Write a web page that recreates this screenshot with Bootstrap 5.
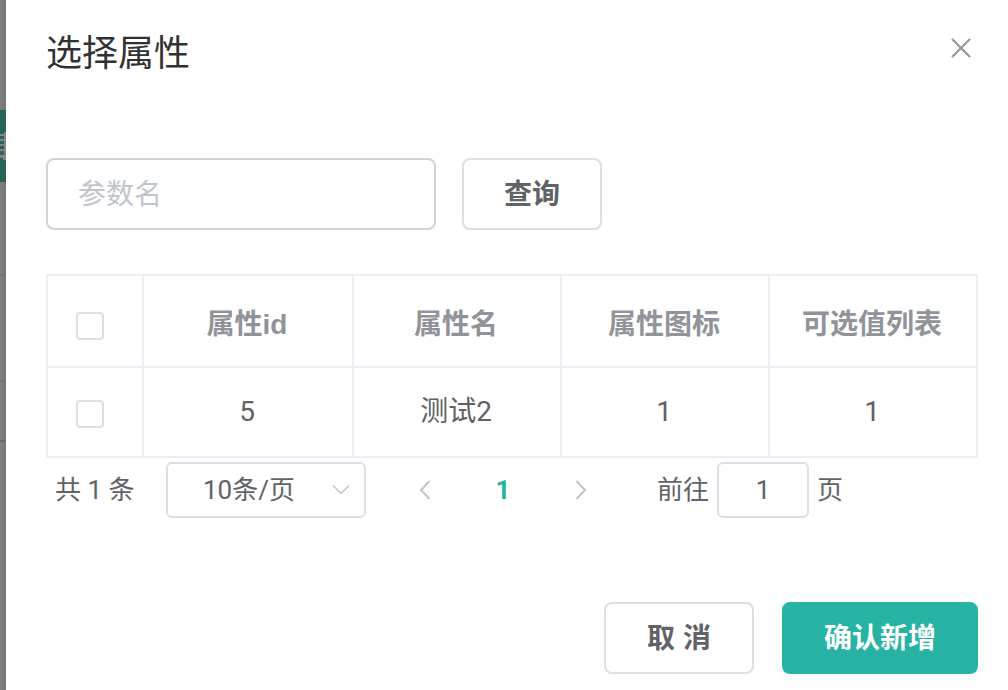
<!DOCTYPE html>
<html lang="zh-CN">
<head>
<meta charset="utf-8">
<meta name="viewport" content="width=device-width, initial-scale=1">
<title>选择属性</title>
<link href="https://cdn.jsdelivr.net/npm/bootstrap@5.3.0/dist/css/bootstrap.min.css" rel="stylesheet">
<style>
  body { font-family: "Liberation Sans", "Noto Sans CJK SC", sans-serif; font-size: 28px; line-height: 40px; color: #606266; background: #fff; }
  .page-edge { width: 6px; background: linear-gradient(90deg, #808080, #757575); }
  .edge-panel { height: 442px; border-bottom: 2px solid #686868; padding-top: 110px; }
  .edge-tab { height: 72px; background: #28635b; padding-top: 22px; }
  .edge-tab svg { display: block; }
  .edge-line { border-top: 2px solid #727278; height: 106px; }
  .edge-gap { height: 92px; }
  .dialog { padding: 32px 30px 16px 40px; }
  .dialog-title { font-size: 36px; line-height: 44px; color: #303133; }
  .close-btn { margin: 6px 7px 0 0; line-height: 0; }
  .box, .box:focus { border: 2px solid #dcdfe6; border-radius: 8px; color: #606266; background-color: #fff; font-size: 28px; line-height: 40px; }
  .search-row { margin-top: 82px; gap: 26px; }
  .search-input { width: 390px; height: 72px; padding: 2px 30px 0; border-color: #cfd3db; }
  .search-input::placeholder { color: #c0c4cc; opacity: 1; }
  .tall { height: 72px; font-weight: 700; padding: 2px 0 0; }
  .w-query { width: 140px; } .w-cancel { width: 150px; } .w-ok { width: 196px; }
  .ok-btn, .ok-btn:hover { background: #26b3a3; color: #fff; border: 0; border-radius: 8px; font-size: 28px; }
  .attr-table { margin-top: 44px; table-layout: fixed; border-collapse: separate; border-spacing: 0; border: solid #ebeef5; border-width: 2px 0 0 2px; }
  .attr-table th, .attr-table td { border: solid #ebeef5; border-width: 0 2px 2px 0; text-align: center; vertical-align: middle; padding: 0 2px 0 0; height: 90px; }
  .attr-table th { color: #909399; height: 92px; padding-top: 8px; }
  .attr-table td, .pager, .pager .box { font-family: Roboto, "Noto Sans CJK SC", sans-serif; }
  .attr-table .pick { text-align: left; padding-left: 28px; line-height: 0; width: 96px; }
  .pick .form-check-input { width: 28px; height: 28px; margin: 2px 0 0; border: 2px solid #dcdfe6; border-radius: 4px; }
  td.pick .form-check-input { margin-top: 4px; }
  .col-id { width: 210px; }
  .pager { margin-top: 4px; font-size: 26px; line-height: 32px; }
  .pager .box { height: 56px; font-size: 26px; border-radius: 6px; }
  .total { width: 120px; padding-left: 9px; }
  .size-wrap { width: 200px; }
  .size-wrap select { appearance: none; padding: 0 0 0 35px; width: 100%; }
  .size-wrap svg { right: 16px; top: 22px; pointer-events: none; }
  .pager-nav { margin-left: 20px; }
  .pager-nav button, .pager-nav a { width: 78px; text-align: center; line-height: 32px; }
  .pager-nav a { color: #26b3a3; }
  .jump { margin-left: 37px; gap: 8px; }
  .jump input { width: 92px; padding: 0; text-align: center; }
  .foot { margin-top: 84px; gap: 28px; }
</style>
</head>
<body>
<div class="d-flex min-vh-100">
  <div class="page-edge flex-shrink-0" aria-hidden="true">
    <div class="edge-panel">
      <div class="edge-tab">
        <svg width="6" height="28" viewBox="0 0 6 28"><path d="M4 0h2v28H3v-2H0v-3h4zM0 2h4v2H0zM0 7h4v2H0zM0 12h4v2H0zM0 17h4v2H0z" fill="#858585"/></svg>
      </div>
      <div class="edge-gap"></div>
      <div class="edge-line"></div>
      <div class="edge-line h-auto"></div>
    </div>
  </div>
  <main class="dialog flex-grow-1">
    <header class="d-flex justify-content-between align-items-start">
      <h1 class="dialog-title fw-normal mb-0">选择属性</h1>
      <button type="button" class="close-btn btn p-0 border-0" aria-label="关闭">
        <svg width="20" height="20" viewBox="0 0 20 20" fill="none" stroke="#909399" stroke-width="2"><path d="M1 1l18 18M19 1L1 19"/></svg>
      </button>
    </header>

    <form class="search-row d-flex">
      <input type="text" class="box form-control search-input" placeholder="参数名" aria-label="参数名">
      <button type="button" class="box btn tall w-query">查询</button>
    </form>

    <table class="attr-table w-100">
      <thead>
        <tr>
          <th class="pick"><input type="checkbox" class="form-check-input" aria-label="全选"></th>
          <th class="col-id">属性id</th>
          <th>属性名</th>
          <th>属性图标</th>
          <th>可选值列表</th>
        </tr>
      </thead>
      <tbody>
        <tr>
          <td class="pick"><input type="checkbox" class="form-check-input" aria-label="选择测试2"></td>
          <td>5</td>
          <td>测试2</td>
          <td>1</td>
          <td>1</td>
        </tr>
      </tbody>
    </table>

    <div class="pager d-flex align-items-center">
      <span class="total">共 1 条</span>
      <div class="size-wrap position-relative">
        <select class="box" aria-label="每页条数"><option>10条/页</option></select>
        <svg class="position-absolute" width="18" height="12" viewBox="0 0 18 12" fill="none" stroke="#c0c4cc" stroke-width="1.500"><path d="M1 1.500l8 8 8-8"/></svg>
      </div>
      <nav class="pager-nav d-flex" aria-label="分页">
        <button type="button" class="btn p-0 border-0" aria-label="上一页"><svg class="d-block mx-auto" width="12" height="20" viewBox="0 0 12 20" fill="none" stroke="#c0c4cc" stroke-width="2"><path d="M10.500 1L2 10l8.500 9"/></svg></button>
        <a href="#" class="fw-bold text-decoration-none" aria-current="page">1</a>
        <button type="button" class="btn p-0 border-0" aria-label="下一页"><svg class="d-block mx-auto" width="12" height="20" viewBox="0 0 12 20" fill="none" stroke="#c0c4cc" stroke-width="2"><path d="M1.500 1L10 10l-8.500 9"/></svg></button>
      </nav>
      <div class="jump d-flex align-items-center">
        <label for="jump-page">前往</label>
        <input id="jump-page" type="text" class="box" value="1">
        <span>页</span>
      </div>
    </div>

    <footer class="foot d-flex justify-content-end">
      <button type="button" class="box btn tall w-cancel">取 消</button>
      <button type="button" class="ok-btn btn tall w-ok">确认新增</button>
    </footer>
  </main>
</div>
<script src="https://cdn.jsdelivr.net/npm/bootstrap@5.3.0/dist/js/bootstrap.bundle.min.js"></script>
</body>
</html>
